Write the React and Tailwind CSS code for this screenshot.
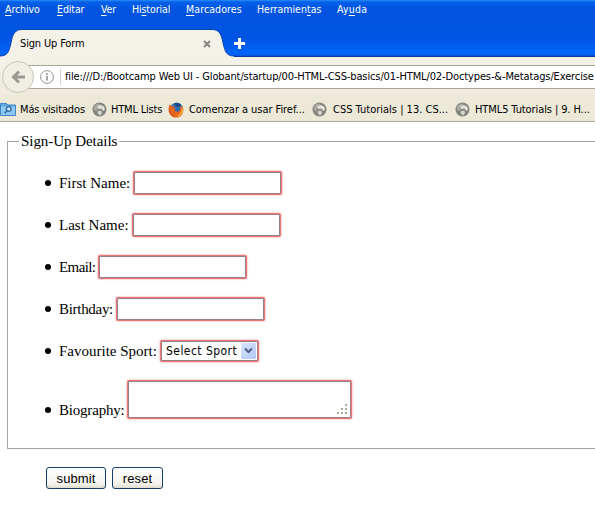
import React from "react";

const menu = [
  ["", "A", "rchivo", "w-[52px] tracking-[-0.1px]"],
  ["", "E", "ditar", "w-[44px] tracking-[-0.1px]"],
  ["", "V", "er", "w-[31px] tracking-[-0.1px]"],
  ["Hi", "s", "torial", "w-[54px] tracking-[-0.1px]"],
  ["", "M", "arcadores", "w-[71px] tracking-[0.1px]"],
  ["Herramien", "t", "as", "w-[80px] tracking-[0px]"],
  ["Ay", "u", "da", "w-[40px] tracking-[0.2px]"],
];

function Globe() {
  return (
    <svg className="h-[15px] w-[15px] shrink-0" viewBox="0 0 15 15">
      <circle cx="7.500" cy="7.500" r="7" fill="#85857f" />
      <path d="M2 4.500 4 2.500l3-1L8.500 3 7 5.500 5 6l1 1.500L4 9 2 8z" fill="#a9a8a1" />
      <path d="M5 4.500 8.500 3 12 4.500l1 3-2 1.500-1.500-2.500L6.500 7z" fill="#e4e3db" />
      <path d="m5.500 9.500 3-1 1.500 1.500-.5 2-1.500 1.500-2-2z" fill="#d8d7cf" />
    </svg>
  );
}

function Firefox() {
  return (
    <svg className="h-4 w-4 shrink-0" viewBox="0 0 16 16">
      <circle cx="8.500" cy="7.500" r="6.800" fill="#2b6fb3" />
      <path d="M6 1.500c3-1.500 6-.3 7.500 2L10 5 7.500 3.500z" fill="#1b4787" />
      <path d="M1.500 2.500 3.500 4 6 3.800 5.300 5.500 8 6.500 6.500 8c.5 2 3.500 2.300 5 .7 1.400-1.500.8-3.700-.2-4.700 2 .6 2.500 2 2.700 3L13.700 3C17 7.500 15 15.500 8 15.500 1.500 15.500-1 8.500 1.500 2.500z" fill="#e8661b" />
      <path d="M13.800 4c2.400 5-.5 10.300-5.300 10.300 3.500-1.300 5.500-4 5.300-10.300z" fill="#ffc83a" />
      <path d="M2 5c-.8 4 1 7.500 4.500 9C2.500 13.500.3 9 2 5z" fill="#c43a18" />
    </svg>
  );
}

function Folder() {
  return (
    <svg className="h-[15px] w-4 shrink-0" viewBox="0 0 16 15">
      <path d="M.5 13.500v-12h6l1 1.500h8v10.500z" fill="#5fa9e0" stroke="#3e86c4" />
      <path d="M1 4.500h14V13H1z" fill="#8fc8f0" />
      <circle cx="8.700" cy="6.900" r="2.400" fill="#c3e3f8" stroke="#2f6ba3" strokeWidth="1.300" />
      <path d="m7 8.700-2.300 2.500" stroke="#2f6ba3" strokeWidth="1.600" />
    </svg>
  );
}

function Row({ label, width, height, children }) {
  return (
    <li className={`flex items-center ${height}`}>
      <span className="mr-2 h-[6px] w-[6px] shrink-0 rounded-full bg-black" />
      <span className={`shrink-0 whitespace-nowrap ${width}`}>{label}</span>
      {children}
    </li>
  );
}

const glow = "border border-[#957f8d] bg-white shadow-[0_0_1px_1px_#f07070,0_0_2px_1px_#ff9c9c] rounded-[1px] outline-none";

export default function App() {
  return (
    <div className="h-[507px] w-[595px] overflow-hidden bg-white font-['DejaVu_Sans_Condensed','DejaVu_Sans',sans-serif] text-[11px] text-black [font-stretch:condensed]">
      <header className="h-[57px] border-b border-[#0a3a9c] bg-[linear-gradient(#2a8cf8_0px,#0560ea_2px,#0054e0_8px,#0054e3_38px,#0066fb_54px,#0550cf_56px)]">
        <nav className="flex h-[29px] pl-[5px] pt-[2px] leading-[14px] text-white text-[10.500px]">
          {menu.map(([a, b, c, w]) => (
            <span key={b + c} className={`shrink-0 whitespace-nowrap ${w}`}>
              {a}<span className="underline underline-offset-[2px]">{b}</span>{c}
            </span>
          ))}
        </nav>
        <div className="flex h-[28px]">
          <svg className="h-[28px] w-[22px] shrink-0" viewBox="0 0 22 28">
            <path d="M0 28v-1C8 27 9 22 11 14 12.500 5 15 .5 22 .5V28z" fill="#f4f1e8" />
            <path d="M0 27C8 27 9 22 11 14 12.500 5 15 .5 22 .5" fill="none" stroke="#0b45ae" />
          </svg>
          <div className="flex h-[28px] w-[190px] items-center justify-between border-t border-[#0b45ae] bg-[#f4f1e8]">
            <span className="-ml-[2px] mt-px whitespace-nowrap tracking-[-0.15px]">Sign Up Form</span>
            <svg className="mr-px h-2 w-2" viewBox="0 0 8 8"><path d="m1 1 6 6m0-6L1 7" stroke="#858582" strokeWidth="2" /></svg>
          </div>
          <svg className="h-[28px] w-[22px] shrink-0" viewBox="0 0 22 28">
            <path d="M22 28v-1C14 27 13 22 11 14 9.500 5 7 .5 0 .5V28z" fill="#f4f1e8" />
            <path d="M22 27C14 27 13 22 11 14 9.500 5 7 .5 0 .5" fill="none" stroke="#0b45ae" />
          </svg>
          <svg className="mt-[9px] h-[11px] w-[11px]" viewBox="0 0 11 11"><path d="M5.500 0v11M0 5.500h11" stroke="#fff" strokeWidth="3" /></svg>
        </div>
      </header>
      <div className="flex h-[38px] items-center bg-[linear-gradient(#f4f1e8,#eeebdc)] pt-[1px]">
        <div className="z-10 ml-[2px] flex h-[32px] w-[32px] shrink-0 items-center justify-center rounded-full border border-[#c9c6ba] bg-[#f1eee3]">
          <svg className="h-[14px] w-[14px]" viewBox="0 0 14 14"><path d="M8 1.500 2.500 7 8 12.500M3 7h11" fill="none" stroke="#9b9993" strokeWidth="3" /></svg>
        </div>
        <div className="-ml-[8px] flex h-[24px] flex-1 items-center overflow-hidden border-y border-[#aaa698] bg-white pl-[14px]">
          <svg className="h-[14px] w-[14px] shrink-0" viewBox="0 0 14 14">
            <circle cx="7" cy="7" r="6.400" fill="none" stroke="#929292" />
            <path d="M7 6v4.500M7 3.200v1.700" stroke="#858585" strokeWidth="1.500" />
          </svg>
          <span className="ml-[6px] h-4 w-px shrink-0 bg-[#d0d0d0]" />
          <span className="ml-[4px] mt-[2px] whitespace-nowrap tracking-[-0.12px]">file:///D:/Bootcamp Web UI - Globant/startup/00-HTML-CSS-basics/01-HTML/02-Doctypes-&amp;-Metatags/Exercise</span>
        </div>
      </div>
      <div className="flex h-[27px] items-center whitespace-nowrap border-b border-[#aaa698] bg-[#ece9d8] pt-[3px]">
        <Folder /><span className="ml-1 mt-px w-[72px] shrink-0 tracking-[-0.15px]">Más visitados</span>
        <Globe /><span className="ml-1 mt-px w-[57px] shrink-0 tracking-[-0.2px]">HTML Lists</span>
        <Firefox /><span className="ml-[5px] mt-px w-[123px] shrink-0 tracking-[-0.05px]">Comenzar a usar Firef...</span>
        <Globe /><span className="ml-[6px] mt-px w-[122px] shrink-0">CSS Tutorials | 13. CS...</span>
        <Globe /><span className="ml-[5px] mt-px shrink-0 tracking-[-0.1px]">HTML5 Tutorials | 9. H...</span>
      </div>
      <form className="font-['Liberation_Serif',serif] text-[15px] leading-[18px]" onSubmit={(e) => e.preventDefault()}>
        <fieldset className="ml-[7px] mt-[10px] h-[317px] w-[600px] border border-[#a5a5a0] pl-[37px]">
          <legend className="-ml-[26px] h-[18px] whitespace-nowrap px-[2px]"><span className="tracking-[-0.05px]">Sign-Up Details</span></legend>
          <ul className="mt-[12px]">
            <Row label="First Name:" height="h-[42px]" width="w-[75px]"><input className={`h-[22px] w-[147px] ${glow}`} /></Row>
            <Row label="Last Name:" height="h-[42px]" width="w-[74px]"><input className={`h-[22px] w-[147px] ${glow}`} /></Row>
            <Row label="Email:" height="h-[42px]" width="w-[40px] tracking-[-0.6px]"><input className={`h-[22px] w-[147px] ${glow}`} /></Row>
            <Row label="Birthday:" height="h-[42px]" width="w-[58px] tracking-[-0.3px]"><input className={`h-[22px] w-[147px] ${glow}`} /></Row>
            <Row label="Favourite Sport:" height="h-[41px]" width="w-[102px]">
              <button type="button" className={`flex h-[20px] w-[97px] items-center justify-between pl-[4px] pr-px font-['DejaVu_Sans_Condensed','DejaVu_Sans',sans-serif] text-[12px] tracking-[0.45px] ${glow}`}>
                <span className="whitespace-nowrap">Select Sport</span>
                <span className="flex h-4 w-[15px] shrink-0 items-center justify-center rounded-[1px] bg-[linear-gradient(135deg,#dbe6ff,#b0c7f6)]">
                  <svg className="h-[7px] w-[9px]" viewBox="0 0 9 7"><path d="m1 1.500 3.500 3.500L8 1.500" fill="none" stroke="#4d6185" strokeWidth="2" /></svg>
                </span>
              </button>
            </Row>
            <li className="flex pt-[10px]">
              <span className="mr-2 mt-[26px] h-[6px] w-[6px] shrink-0 rounded-full bg-black" />
              <span className="mt-[20px] w-[69px] shrink-0 tracking-[-0.2px]">Biography:</span>
              <div className={`flex h-[37px] w-[223px] items-end justify-end p-[3px] ${glow}`}>
                <svg className="h-[10px] w-[10px]" viewBox="0 0 10 10" fill="#aaa99f">
                  <path d="M8 0h2v2H8zM4 4h2v2H4zM8 4h2v2H8zM0 8h2v2H0zM4 8h2v2H4zM8 8h2v2H8z" />
                </svg>
              </div>
            </li>
          </ul>
        </fieldset>
        <div className="ml-[46px] mt-[18px] flex gap-[6px] font-['Liberation_Sans',sans-serif] text-[13px]">
          <button className="h-[22px] w-[60px] rounded-[3px] border border-[#153e6e] bg-[linear-gradient(#fff,#f3f2ec_80%,#dedacd)] pt-px tracking-[0.1px]">submit</button>
          <button type="reset" className="h-[22px] w-[51px] rounded-[3px] border border-[#153e6e] bg-[linear-gradient(#fff,#f3f2ec_80%,#dedacd)] pt-px tracking-[0.1px]">reset</button>
        </div>
      </form>
    </div>
  );
}
